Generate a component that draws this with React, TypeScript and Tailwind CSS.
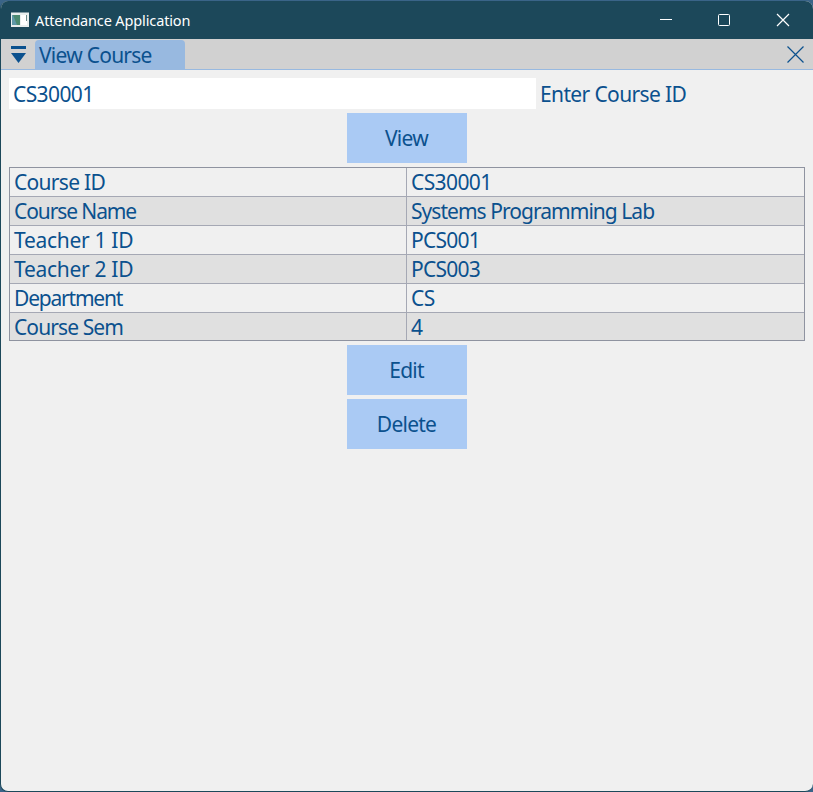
const rows = [
  { label: 'Course ID', value: 'CS30001', l: 'tracking-[-0.7px]', v: 'tracking-[-0.6px]' },
  { label: 'Course Name', value: 'Systems Programming Lab', l: 'tracking-[-1.1px]', v: 'tracking-[-0.96px]' },
  { label: 'Teacher 1 ID', value: 'PCS001', l: 'tracking-[-0.3px]', v: 'tracking-[-0.75px]' },
  { label: 'Teacher 2 ID', value: 'PCS003', l: 'tracking-[-0.3px]', v: 'tracking-[-0.75px]' },
  { label: 'Department', value: 'CS', l: 'tracking-[-1.2px]', v: 'tracking-[-0.5px]' },
  { label: 'Course Sem', value: '4', l: 'tracking-[-0.9px]', v: 'tracking-[-0.5px]' },
];

function ActionButton({ children }: { children: string }) {
  return (
    <button className="flex h-[50px] w-[120px] items-center justify-center bg-[#aacaf4] pr-px tracking-[-0.75px]">
      {children}
    </button>
  );
}

function TitleBar() {
  return (
    <header className="flex h-[38px] shrink-0 items-center bg-[#1c485a] text-white">
      <svg className="mb-px ml-[10px] shrink-0" width="18" height="15" viewBox="0 0 18 15">
        <rect x="0" y="0.5" width="18" height="14.5" fill="#e9eeee" />
        <rect x="1" y="3" width="8" height="10" fill="#5f98a8" />
        <path d="M2 3H9V13H6Z" fill="#4b8a70" />
        <rect x="10" y="3" width="6" height="10" fill="#ffffff" />
        <rect x="15" y="3" width="1" height="6" fill="#6d8a88" />
      </svg>
      <h1 className="ml-[6px] flex-1 text-[14.5px] leading-5 tracking-[-0.13px] whitespace-nowrap">
        <span className="block">Attendance Application</span>
      </h1>
      <svg width="154" height="38" viewBox="0 0 154 38" fill="none" stroke="#ffffff" className="shrink-0">
        <path d="M1 18.5H13" />
        <rect x="59.5" y="13.5" width="11" height="11" rx="1" />
        <path d="M118 13L130 25M130 13L118 25" strokeWidth="1.2" />
      </svg>
    </header>
  );
}

export default function App() {
  return (
    <div className="h-[792px] w-[813px] overflow-hidden bg-[#3a6488] pt-px font-['Noto_Sans',sans-serif] text-[21px] leading-7 text-[#0b518e]">
      <div className="flex h-[791px] flex-col overflow-hidden rounded-[8px] border-b border-l border-[#1c485a] bg-[#f0f0f0]">
        <TitleBar />
        <nav className="flex h-[31px] shrink-0 items-end border-b border-b-[#98b9e0] bg-[#d1d1d1]">
          <svg className="mb-[6px] ml-[10px]" width="15" height="18" viewBox="0 0 15 18" fill="#0b518e">
            <rect x="0" y="1" width="15" height="3" />
            <path d="M0 8H15L7.500 18Z" />
          </svg>
          <div className="ml-[9px] h-[29px] w-[150px] rounded-t-[4px] bg-[#98b9e0] pt-px pl-1 tracking-[-0.75px] whitespace-nowrap">
            View Course
          </div>
          <svg className="mr-[9px] mb-[6px] ml-auto" width="17" height="17" viewBox="0 0 17 17" stroke="#0b518e" strokeWidth="1.2">
            <path d="M0.500 0.500L16.500 16.500M16.500 0.500L0.500 16.500" />
          </svg>
        </nav>
        <main className="flex flex-col items-center gap-1 pt-2 pr-2 pl-2">
          <div className="flex h-[31px] w-full items-center gap-1 whitespace-nowrap">
            <div className="h-[31px] w-[527px] bg-white pt-[2px] pl-1 tracking-[-0.6px]">CS30001</div>
            <label className="pt-px tracking-[-0.63px]">Enter Course ID</label>
          </div>
          <ActionButton>View</ActionButton>
          <div className="flex h-[174px] w-full flex-col border border-[#8f93a0]">
            {rows.map((row, i) => (
              <div
                key={row.label}
                className={
                  'flex shrink-0 border-[#a5a8b4] whitespace-nowrap ' +
                  (i % 2 ? 'bg-[#e0e0e0] ' : '') +
                  (i < 5 ? 'h-[29px] border-b' : 'h-[27px]')
                }
              >
                <div className={'w-[397px] shrink-0 border-r border-[#a5a8b4] pl-1 ' + row.l}>{row.label}</div>
                <div className={'pl-1 ' + row.v}>{row.value}</div>
              </div>
            ))}
          </div>
          <ActionButton>Edit</ActionButton>
          <ActionButton>Delete</ActionButton>
        </main>
      </div>
    </div>
  );
}
